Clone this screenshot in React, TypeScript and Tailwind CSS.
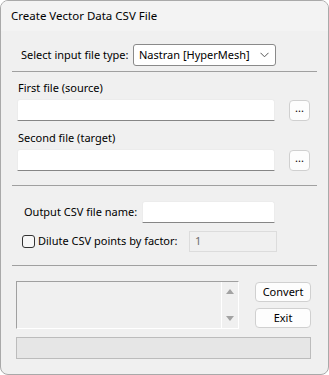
import React from 'react'

const font = { fontFamily: '"Noto Sans", "Liberation Sans", sans-serif' }

function TextBox({ className = '' }: { className?: string }) {
  return (
    <div
      className={`h-[22px] bg-white border border-[#ececec] border-b-[#868686] rounded-[3px] rounded-b-none shrink-0 ${className}`}
    />
  )
}

function SmallButton({ label, className = '' }: { label: string; className?: string }) {
  return (
    <button
      className={`flex items-center justify-center bg-[#fdfdfd] border border-[#d0d0d0] rounded-[4px] text-[11px] text-black shrink-0 ${className}`}
    >
      {label}
    </button>
  )
}

function Separator({ className = '' }: { className?: string }) {
  return <div className={`h-px bg-[#a0a0a0] shrink-0 ${className}`} />
}

export default function App() {
  return (
    <div className="w-[329px] h-[375px] bg-[#f0f0f0] border border-[#a9a9a9] rounded-[8px] overflow-hidden flex flex-col text-black text-[11px] whitespace-nowrap" style={font}>
      <div className="h-[30px] bg-[#f3f3f3] flex items-center pl-[10px] shrink-0 text-[11.5px]">
        Create Vector Data CSV File
      </div>

      <div className="px-[11px] flex flex-col">
        <div className="mt-[13px] h-[22px] flex items-center pl-[9px]">
          <span className="w-[112px] shrink-0">Select input file type:</span>
          <div className="w-[143px] h-[22px] bg-white border border-[#8a8a8a] rounded-[3px] flex items-center pl-[5px] pr-[6px] shrink-0">
            <span className="flex-1">Nastran [HyperMesh]</span>
            <svg width="9" height="6" viewBox="0 0 9 6" fill="none">
              <path d="M0.5 0.8 L4.5 4.8 L8.5 0.8" stroke="#555" strokeWidth="1" />
            </svg>
          </div>
        </div>

        <Separator className="mt-[5px]" />

        <div className="mt-[8px] h-[16px] flex items-center pl-[6px]">First file (source)</div>
        <div className="mt-[3px] flex items-center pl-[5px]">
          <TextBox className="w-[258px]" />
          <SmallButton label="..." className="ml-[14px] w-[21px] h-[21px] pb-[3px]" />
        </div>

        <div className="mt-[9px] h-[16px] flex items-center pl-[6px]">Second file (target)</div>
        <div className="mt-[3px] flex items-center pl-[5px]">
          <TextBox className="w-[258px]" />
          <SmallButton label="..." className="ml-[14px] w-[21px] h-[21px] pb-[3px]" />
        </div>

        <Separator className="mt-[14px]" />

        <div className="mt-[15px] flex items-center pl-[12px]">
          <span className="w-[118px] shrink-0">Output CSV file name:</span>
          <TextBox className="w-[133px]" />
        </div>

        <div className="mt-[8px] flex items-center pl-[10px]">
          <div className="w-[13px] h-[13px] border border-[#333] rounded-[3px] bg-[#f7f7f7] shrink-0" />
          <span className="ml-[3px] w-[151px] shrink-0">Dilute CSV points by factor:</span>
          <div className="w-[88px] h-[21px] border border-[#dcdcdc] bg-[#f0f0f0] flex items-center pl-[5px] text-[#6d6d6d] shrink-0">
            1
          </div>
        </div>

        <Separator className="mt-[13px]" />

        <div className="mt-[15px] flex pl-[4px]">
          <div className="w-[223px] h-[48px] border border-[#a0a0a0] border-r-white border-b-white bg-[#f0f0f0] flex justify-end shrink-0">
            <div className="w-[17px] border-l border-[#ffffff] flex flex-col items-center justify-between py-[7px]">
              <svg width="8" height="5" viewBox="0 0 8 5">
                <path d="M0 5 L4 0 L8 5 Z" fill="#a3a3a3" />
              </svg>
              <svg width="8" height="5" viewBox="0 0 8 5">
                <path d="M0 0 L4 5 L8 0 Z" fill="#a3a3a3" />
              </svg>
            </div>
          </div>
          <div className="ml-[16px] flex flex-col">
            <SmallButton label="Convert" className="w-[56px] h-[20px] mt-[1px]" />
            <SmallButton label="Exit" className="w-[56px] h-[20px] mt-[6px]" />
          </div>
        </div>

        <div className="mt-[8px] ml-[4px] w-[295px] h-[22px] bg-[#e6e6e6] border border-[#bcbcbc] shrink-0" />
      </div>
    </div>
  )
}
